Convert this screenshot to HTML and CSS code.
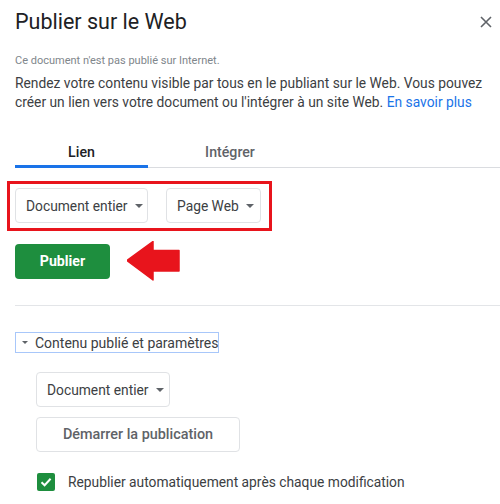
FILE: index.html
```html
<!DOCTYPE html>
<html lang="fr">
<head>
  <meta charset="UTF-8">
  <title>Publier sur le Web</title>
  <link rel="stylesheet" href="styles.css">
</head>
<body>
  <div class="dialog">
    <div class="header">
      <h1>Publier sur le Web</h1>
      <svg class="close" width="12" height="12" viewBox="0 0 12 12">
        <path d="M1 1L11 11M11 1L1 11" stroke="#5f6368" stroke-width="1.6" fill="none"/>
      </svg>
    </div>

    <p class="status">Ce document n'est pas publié sur Internet.</p>
    <p class="intro">Rendez votre contenu visible par tous en le publiant sur le Web. Vous pouvez créer un lien vers votre document ou l'intégrer à un site Web. <a href="#">En savoir plus</a></p>

    <div class="tabs">
      <div class="tab active">Lien</div>
      <div class="tab tab-wide">Intégrer</div>
    </div>

    <div class="highlight">
      <div class="dropdown">Document entier <span class="caret"></span></div>
      <div class="dropdown">Page Web <span class="caret"></span></div>
    </div>

    <div class="publish-row">
      <button class="btn-publish">Publier</button>
      <svg class="arrow" width="54" height="40" viewBox="0 0 54 40">
        <path d="M0 19.5L26 0.5V9.5H52V30H26V39Z" fill="#e8141c" stroke="#e8141c" stroke-width="1.5" stroke-linejoin="round"/>
      </svg>
    </div>

    <hr class="sep">

    <div class="section-toggle"><span class="caret small"></span>Contenu publié et paramètres</div>

    <div class="settings">
      <div class="dropdown">Document entier <span class="caret"></span></div>
      <button class="btn-start">Démarrer la publication</button>
      <label class="check">
        <span class="box">
          <svg width="14" height="14" viewBox="0 0 14 14"><path d="M2.5 7.2L5.6 10.2L11.6 3.8" stroke="#fff" stroke-width="2" fill="none"/></svg>
        </span>
        Republier automatiquement après chaque modification
      </label>
    </div>
  </div>
</body>
</html>
```

FILE: styles.css
```css
body {
  margin: 0;
  font-family: Roboto, "Liberation Sans", sans-serif;
  color: #3c4043;
  background: #fff;
}

.dialog {
  padding: 0 0 0 15px;
}

.header {
  display: flex;
  justify-content: space-between;
  align-items: center;
  padding: 3px 8px 0 0;
  height: 36px;
}

h1 {
  margin: 0;
  font-size: 21.5px;
  font-weight: 400;
  color: #202124;
}

.close {
  margin-top: 2px;
}

.status {
  margin: 15px 0 0;
  font-size: 11px;
  color: #80868b;
}

.intro {
  margin: 7px 0 0;
  font-size: 13.8px;
  line-height: 19px;
  color: #3c4043;
}

.intro a {
  color: #1a73e8;
  text-decoration: none;
}

.tabs {
  display: flex;
  margin-top: 32px;
  border-bottom: 1px solid #dadce0;
}

.tab {
  width: 133px;
  text-align: center;
  font-size: 14.2px;
  font-weight: 500;
  color: #5f6368;
  padding-bottom: 5px;
  border-bottom: 3px solid transparent;
  margin-bottom: -1px;
}

.tab.active {
  color: #202124;
  border-bottom-color: #1a73e8;
}

.tab-wide {
  width: 164px;
}

.highlight {
  display: flex;
  gap: 18px;
  width: 248px;
  margin: 13px 0 0 -8px;
  padding: 4px 6px 5px 5px;
  border: 3px solid #e8141c;
}

.dropdown {
  display: inline-flex;
  align-items: center;
  height: 35px;
  padding: 0 10px;
  border: 1px solid #e0e2e5;
  border-radius: 4px;
  font-size: 13.8px;
  color: #3c4043;
  white-space: nowrap;
  box-sizing: border-box;
}

.caret {
  display: inline-block;
  margin-left: 7px;
  border-left: 4px solid transparent;
  border-right: 4px solid transparent;
  border-top: 4px solid #5f6368;
}

.caret.small {
  margin: 0 7px 0 0;
  border-width: 3px 3.5px 0;
}

.highlight .dropdown:first-child {
  width: 133px;
}

.highlight .dropdown:last-child {
  width: 95px;
}

.publish-row {
  display: flex;
  align-items: center;
  gap: 17px;
  margin-top: 10px;
}

.btn-publish {
  width: 95px;
  height: 35px;
  border: none;
  border-radius: 4px;
  background: #1e8e3e;
  color: #fff;
  font-family: inherit;
  font-size: 14.2px;
  font-weight: 700;
}

.sep {
  margin: 24px 0 0;
  border: none;
  border-top: 1px solid #e3e5e8;
}

.section-toggle {
  display: inline-flex;
  align-items: center;
  margin-top: 26px;
  height: 19px;
  padding: 0 0 0 6px;
  border: 1px solid #a8c7fa;
  font-size: 14px;
  color: #3c4043;
}

.settings {
  display: flex;
  flex-direction: column;
  align-items: flex-start;
  gap: 10px;
  margin: 19px 0 0 21px;
}

.settings .dropdown {
  width: 134px;
}

.btn-start {
  width: 204px;
  height: 35px;
  background: #fff;
  border: 1px solid #e0e2e5;
  border-radius: 4px;
  font-family: inherit;
  font-size: 14.4px;
  font-weight: 500;
  color: #5f6368;
}

.check {
  display: flex;
  align-items: center;
  gap: 13px;
  margin: 11px 0 0 1px;
  font-size: 13.8px;
  color: #3c4043;
}

.box {
  display: flex;
  align-items: center;
  justify-content: center;
  width: 18px;
  height: 18px;
  border-radius: 2px;
  background: #1e8e3e;
}
```
